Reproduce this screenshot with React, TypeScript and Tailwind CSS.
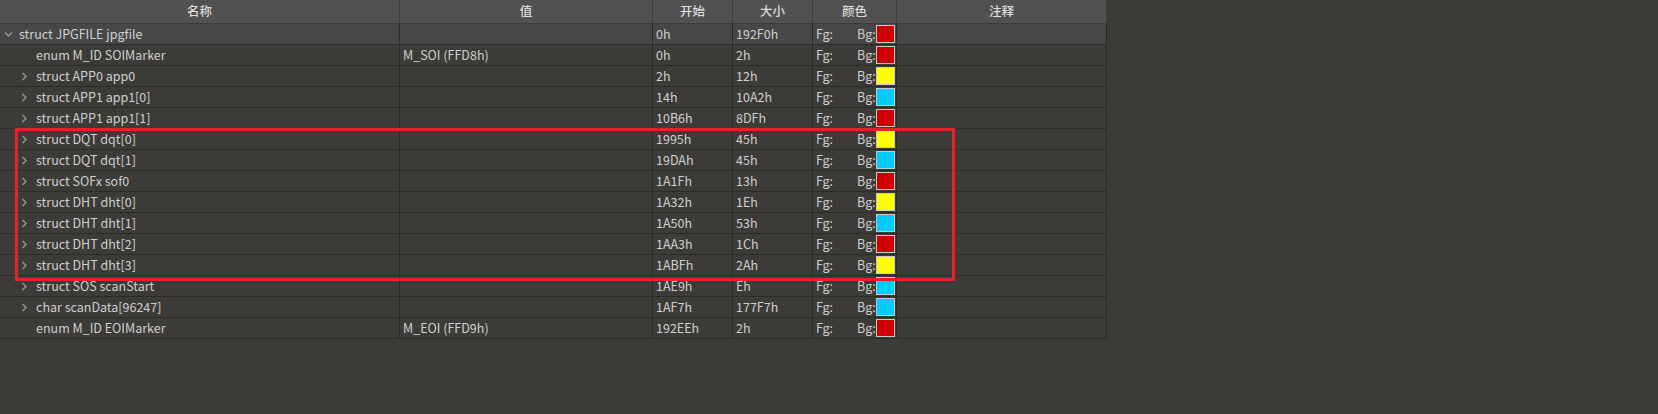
import React from "react";

type Row = {
  name: string;
  value?: string;
  start: string;
  size: string;
  bg: string;
  depth: number;
  expander?: "open" | "closed";
  selected?: boolean;
};

const RED = "#cc0000";
const YELLOW = "#ffff00";
const CYAN = "#00ccff";

const rows: Row[] = [
  { name: "struct JPGFILE jpgfile", start: "0h", size: "192F0h", bg: RED, depth: 0, expander: "open", selected: true },
  { name: "enum M_ID SOIMarker", value: "M_SOI (FFD8h)", start: "0h", size: "2h", bg: RED, depth: 1 },
  { name: "struct APP0 app0", start: "2h", size: "12h", bg: YELLOW, depth: 1, expander: "closed" },
  { name: "struct APP1 app1[0]", start: "14h", size: "10A2h", bg: CYAN, depth: 1, expander: "closed" },
  { name: "struct APP1 app1[1]", start: "10B6h", size: "8DFh", bg: RED, depth: 1, expander: "closed" },
  { name: "struct DQT dqt[0]", start: "1995h", size: "45h", bg: YELLOW, depth: 1, expander: "closed" },
  { name: "struct DQT dqt[1]", start: "19DAh", size: "45h", bg: CYAN, depth: 1, expander: "closed" },
  { name: "struct SOFx sof0", start: "1A1Fh", size: "13h", bg: RED, depth: 1, expander: "closed" },
  { name: "struct DHT dht[0]", start: "1A32h", size: "1Eh", bg: YELLOW, depth: 1, expander: "closed" },
  { name: "struct DHT dht[1]", start: "1A50h", size: "53h", bg: CYAN, depth: 1, expander: "closed" },
  { name: "struct DHT dht[2]", start: "1AA3h", size: "1Ch", bg: RED, depth: 1, expander: "closed" },
  { name: "struct DHT dht[3]", start: "1ABFh", size: "2Ah", bg: YELLOW, depth: 1, expander: "closed" },
  { name: "struct SOS scanStart", start: "1AE9h", size: "Eh", bg: CYAN, depth: 1, expander: "closed" },
  { name: "char scanData[96247]", start: "1AF7h", size: "177F7h", bg: CYAN, depth: 1, expander: "closed" },
  { name: "enum M_ID EOIMarker", value: "M_EOI (FFD9h)", start: "192EEh", size: "2h", bg: RED, depth: 1 },
];

const cols = "grid-cols-[400px_253px_80px_80px_84px_210px]";

const Chevron = ({ open }: { open: boolean }) => (
  <svg width="9" height="9" viewBox="0 0 9 9" className="shrink-0">
    {open ? (
      <path d="M1 2.5 L4.5 6 L8 2.5" fill="none" stroke="#9a9a9a" strokeWidth="1.3" />
    ) : (
      <path d="M2.5 1 L6 4.5 L2.5 8" fill="none" stroke="#9a9a9a" strokeWidth="1.3" />
    )}
  </svg>
);

const Cell = ({ children, className = "" }: { children?: React.ReactNode; className?: string }) => (
  <div className={`flex items-center h-full border-r border-b border-[#2c2b28] overflow-hidden whitespace-nowrap ${className}`}>
    {children}
  </div>
);

export default function App() {
  return (
    <div
      className="relative w-[1658px] h-[414px] bg-[#3c3b37] text-[12.5px] text-[#cfcfcf] overflow-hidden"
      style={{ fontFamily: '"Noto Sans CJK SC", "Noto Sans", sans-serif' }}
    >
      <div className="w-[1107px]">
        <div className={`grid ${cols} h-[24px] bg-[#515151] text-[#dedede]`}>
          {["名称", "值", "开始", "大小", "颜色", "注释"].map((h) => (
            <div key={h} className="flex items-center justify-center border-r border-b border-[#3b3b3b] font-medium">
              {h}
            </div>
          ))}
        </div>
        {rows.map((r) => (
          <div key={r.name} className={`grid ${cols} h-[21px] ${r.selected ? "bg-[#474747]" : ""}`}>
            <Cell className={r.depth === 0 ? "pl-[4px]" : "pl-[20px]"}>
              <span className="w-[12px] flex items-center">
                {r.expander && <Chevron open={r.expander === "open"} />}
              </span>
              <span className={r.depth === 0 ? "ml-[3px]" : "ml-[4px]"}>{r.name}</span>
            </Cell>
            <Cell className="pl-[3px]">{r.value}</Cell>
            <Cell className="pl-[3px]">{r.start}</Cell>
            <Cell className="pl-[3px]">{r.size}</Cell>
            <Cell className="pl-[3px]">
              <span className="w-[41px]">Fg:</span>
              <span>Bg:</span>
              <span
                className="w-[19px] h-[18px] border border-[#c8c8c8]"
                style={{ backgroundColor: r.bg }}
              />
            </Cell>
            <Cell />
          </div>
        ))}
      </div>
      <div className="absolute left-[15px] top-[128px] w-[940px] h-[153px] border-[3px] border-[#e8202a] pointer-events-none" />
    </div>
  );
}
